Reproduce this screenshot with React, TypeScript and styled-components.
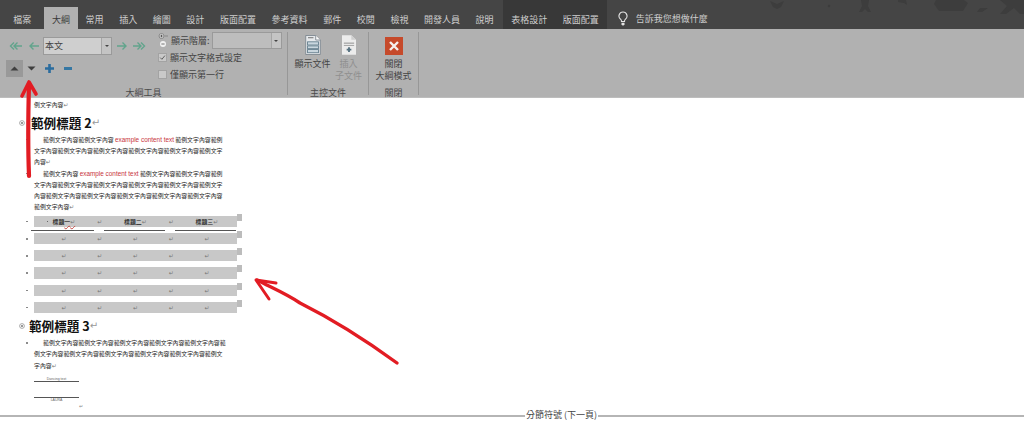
import styled, { createGlobalStyle } from 'styled-components';

const cjk = `"Noto Sans CJK TC", "Noto Sans", sans-serif`;
const RED = '#e21c23';

const GlobalStyle = createGlobalStyle`
  html, body {
    margin: 0;
    padding: 0;
    background: #fff;
    overflow: hidden;
  }
  body {
    font-family: ${cjk};
  }
`;

const Page = styled.div`
  position: relative;
  width: 1024px;
  height: 424px;
  overflow: hidden;
  display: flex;
  flex-direction: column;
  background: #fff;
`;

/* ---------- tab bar ---------- */

const TabBar = styled.div`
  position: relative;
  height: 29px;
  flex: none;
  display: flex;
  align-items: flex-end;
  padding-left: 5.5px;
  background: #454545;
  color: #cfcfcf;
  font-size: 9px;
`;

const Tab = styled.div<{ $active?: boolean; $first?: boolean }>`
  height: ${(p) => (p.$active ? 22 : 20)}px;
  padding: ${(p) => (p.$active ? 4 : 2)}px 7.8px 0;
  box-sizing: border-box;
  line-height: 18px;
  white-space: nowrap;
  margin-right: ${(p) => (p.$first ? 5 : 0)}px;
  background: ${(p) => (p.$active ? '#b1b1b1' : 'transparent')};
  color: ${(p) => (p.$active ? '#3a3a3a' : 'inherit')};
`;

const ContextTabs = styled.div`
  display: flex;
  align-items: flex-end;
  height: 29px;
  margin-left: 2px;
  background: #383838;
`;

const TellMe = styled.div`
  display: flex;
  align-items: center;
  gap: 8px;
  height: 20px;
  margin-left: 11px;
  line-height: 18px;
`;

const Doodles = styled.svg`
  position: absolute;
  top: 0;
  right: 0;
`;

/* ---------- ribbon ---------- */

const Ribbon = styled.div`
  height: 69px;
  flex: none;
  display: flex;
  box-sizing: border-box;
  padding-top: 3px;
  background: #b1b1b1;
  border-bottom: 1px solid #bdbdbd;
  color: #444;
  font-size: 9px;
`;

const Group = styled.div<{ $width: number }>`
  width: ${(p) => p.$width}px;
  height: 63px;
  box-sizing: border-box;
  border-right: 1px solid #979797;
  display: flex;
  flex-direction: column;
`;

const GroupBody = styled.div`
  flex: 1;
  display: flex;
  min-height: 0;
`;

const GroupLabel = styled.div`
  height: 13px;
  margin-bottom: -3.5px;
  line-height: 13px;
  text-align: center;
  color: #4a4a4a;
`;

const OutlineColumn = styled.div`
  width: 152px;
  flex: none;
  display: flex;
  flex-direction: column;
`;

const PromoteRow = styled.div`
  display: flex;
  align-items: center;
  margin-top: 5px;
  padding-left: 8px;
  height: 18px;
`;

const MoveRow = styled.div`
  display: flex;
  align-items: center;
  margin-top: 5px;
  padding-left: 6px;
  height: 17px;
`;

const IconSlot = styled.div<{ $width: number; $pressed?: boolean }>`
  width: ${(p) => p.$width}px;
  height: 17px;
  flex: none;
  display: flex;
  align-items: center;
  justify-content: center;
  background: ${(p) => (p.$pressed ? '#999' : 'transparent')};
`;

const Select = styled.div<{ $width: number; $height: number; $empty?: boolean }>`
  width: ${(p) => p.$width}px;
  height: ${(p) => p.$height}px;
  flex: none;
  box-sizing: border-box;
  display: flex;
  border: 1px solid #9a9a9a;
  background: ${(p) => (p.$empty ? '#bdbdbd' : '#cfcfcf')};
  color: #444;
  line-height: 16px;
`;

const SelectText = styled.div`
  flex: 1;
  padding-left: 1px;
`;

const SelectCaret = styled.div`
  width: 9px;
  display: flex;
  align-items: center;
  justify-content: center;
  background: #c4c4c4;
  border-left: 1px solid #a5a5a5;
  &::after {
    content: '';
    border: 2px solid transparent;
    border-top: 2.5px solid #444;
    margin-top: 2px;
  }
`;

const OptionsColumn = styled.div`
  display: flex;
  flex-direction: column;
  padding-left: 6px;
`;

const LevelRow = styled.div`
  display: flex;
  align-items: center;
  height: 17px;
  gap: 2px;
`;

const CheckRow = styled.div`
  display: flex;
  align-items: center;
  height: 17px;
  gap: 3px;
  white-space: nowrap;
`;

const CheckBox = styled.div`
  width: 9px;
  height: 9px;
  flex: none;
  box-sizing: border-box;
  display: flex;
  background: #c9c9c9;
  border: 1px solid #a3a3a3;
`;

const LargeButtons = styled.div<{ $shift?: number }>`
  flex: 1;
  display: flex;
  justify-content: center;
  padding-top: 3px;
  padding-left: ${(p) => p.$shift ?? 0}px;
`;

const LargeButton = styled.div<{ $disabled?: boolean }>`
  width: 36px;
  display: flex;
  flex-direction: column;
  align-items: center;
  text-align: center;
  line-height: 12px;
  color: ${(p) => (p.$disabled ? '#8f8f8f' : '#444')};
  white-space: nowrap;
`;

const LargeIcon = styled.div<{ $top?: number }>`
  height: 23px;
  flex: none;
  padding-top: ${(p) => p.$top ?? 0}px;
  box-sizing: border-box;
`;

/* ---------- document ---------- */

const Doc = styled.div`
  flex: 1;
  min-height: 0;
  display: flex;
  flex-direction: column;
  padding-top: 1.4px;
  color: #1c1c1c;
  font-size: 5.9px;
  line-height: 11.25px;
`;

const BodyBlock = styled.div<{ $top?: number }>`
  display: flex;
  margin-top: ${(p) => p.$top ?? 0}px;
  padding-left: 26px;
`;

const Marker = styled.div<{ $blank?: boolean }>`
  width: 8px;
  flex: none;
  &::before {
    content: '';
    display: ${(p) => (p.$blank ? 'none' : 'block')};
    width: 1.5px;
    height: 1.5px;
    margin-top: 5px;
    background: #777;
    border-radius: 50%;
  }
`;

const Para = styled.div`
  width: 196px;
  white-space: nowrap;
`;

const Line = styled.div<{ $indent?: boolean }>`
  height: 11.25px;
  padding-left: ${(p) => (p.$indent ? 9 : 0)}px;
`;

const Highlight = styled.span`
  font-family: "Liberation Sans", sans-serif;
  font-size: 6.4px;
  line-height: 0;
  color: #c8343c;
`;

const Mark = styled.span`
  color: #777;
  font-family: "DejaVu Sans", sans-serif;
  line-height: 0;
`;

const Heading = styled.div<{ $top: number; $gap: number }>`
  display: flex;
  align-items: center;
  height: 20px;
  margin-top: ${(p) => p.$top}px;
  padding-left: 19px;
  font-size: 12.6px;
  font-weight: 700;
  line-height: 20px;
  color: #111;
  white-space: pre;
  & > svg {
    margin-right: ${(p) => p.$gap}px;
    flex: none;
  }
`;

const HeadingMark = styled.span`
  color: #999;
  font-weight: 400;
  font-size: 10px;
  font-family: "DejaVu Sans", sans-serif;
`;

const Table = styled.div`
  margin-top: 3.25px;
  padding-left: 26px;
  display: flex;
  flex-direction: column;
  gap: 6px;
`;

const RowLine = styled.div`
  display: flex;
`;

const Row = styled.div`
  width: 202.5px;
  height: 11.2px;
  display: grid;
  grid-template-columns: repeat(5, 35.75px);
  padding-left: 12px;
  box-sizing: border-box;
  background: #c8c8c8;
  line-height: 11px;
  text-align: center;
  color: #222;
  font-weight: 500;
`;

const Cell = styled.div<{ $dot?: boolean }>`
  position: relative;
  white-space: nowrap;
  &::before {
    content: '';
    display: ${(p) => (p.$dot ? 'block' : 'none')};
    position: absolute;
    left: 0.5px;
    top: 5px;
    width: 1.5px;
    height: 1.5px;
    background: #666;
  }
`;

const RowEnd = styled.div`
  width: 4.5px;
  height: 7px;
  margin: -2px 0 0 0.5px;
  background: #bcbcbc;
`;

const Squiggle = styled.span`
  text-decoration: underline wavy #c4453f 0.5px;
  text-underline-offset: 1px;
`;

const HeaderRules = styled.div`
  display: flex;
  gap: 10px;
  margin: -3px 0 -4px 5px;
  height: 1px;
`;

const HeaderRule = styled.div<{ $width: number }>`
  width: ${(p) => p.$width}px;
  height: 1px;
  background: #555;
`;

const Signature = styled.div<{ $top: number }>`
  margin: ${(p) => p.$top}px 0 0 34px;
  width: 45px;
  display: flex;
  flex-direction: column;
  align-items: center;
  font-family: "Liberation Sans", sans-serif;
  font-size: 3.5px;
  line-height: 4px;
  color: #666;
`;

const SignatureRule = styled.div`
  width: 100%;
  height: 1px;
  flex: none;
  background: #555;
`;

const SignatureBullet = styled.div`
  width: 1.5px;
  height: 1.5px;
  margin: 8px 0 0 26.5px;
  background: #777;
  border-radius: 50%;
`;

const TrailingMark = styled.div`
  margin: 1px 0 0 79px;
  line-height: 6px;
  font-size: 5px;
  color: #888;
`;

const SectionBreak = styled.div`
  margin-top: auto;
  margin-bottom: 3px;
  display: flex;
  align-items: center;
  gap: 1px;
  font-size: 9px;
  line-height: 12px;
  color: #444;
  white-space: nowrap;
`;

const BreakRule = styled.div<{ $width?: number }>`
  flex: ${(p) => (p.$width ? `0 0 ${p.$width}px` : 1)};
  height: 2px;
  margin-top: 1px;
  background: #b5b5b5;
`;

const Annotations = styled.svg`
  position: absolute;
  left: 0;
  top: 0;
  pointer-events: none;
`;

/* ---------- icons ---------- */

const GREEN = '#62a48c';

const ArrowIcon = ({ dir, double }: { dir: 'left' | 'right'; double?: boolean }) => (
  <svg width="14" height="10" viewBox="0 0 14 10">
    <g
      fill="none"
      stroke={GREEN}
      strokeWidth="1.4"
      transform={dir === 'right' ? 'matrix(-1 0 0 1 14 0)' : undefined}
    >
      {double ? (
        <>
          <path d="M5 5h8M8.5 1.5 5 5l3.5 3.5" />
          <path d="M5 1.5 1.5 5 5 8.5" />
        </>
      ) : (
        <path d="M3 5h9M6.5 1.5 3 5l3.5 3.5" />
      )}
    </g>
  </svg>
);

const Triangle = ({ up }: { up?: boolean }) => (
  <svg width="9" height="5" viewBox="0 0 9 5">
    <path d={up ? 'M4.5 0.5 8.5 4.5H0.5z' : 'M0.5 0.5H8.5L4.5 4.5z'} fill="#3f3f3f" />
  </svg>
);

const PlusIcon = () => (
  <svg width="9" height="9" viewBox="0 0 9 9">
    <path d="M3.2 0h2.6v3.2H9v2.6H5.8V9H3.2V5.8H0V3.2h3.2z" fill="#2a6c9e" />
  </svg>
);

const MinusIcon = () => (
  <svg width="8" height="3" viewBox="0 0 8 3">
    <rect width="8" height="3" fill="#3577a3" />
  </svg>
);

const LevelIcon = () => (
  <svg width="11" height="15" viewBox="0 0 11 15">
    <circle cx="3.5" cy="3" r="2.4" fill="#e8e8e8" stroke="#555" strokeWidth="0.6" />
    <path d="M2.2 3h2.6M3.5 1.7v2.6" stroke="#333" strokeWidth="0.7" />
    <path d="M6.5 3H10" stroke="#777" strokeWidth="0.7" />
    <circle cx="5" cy="11" r="3" fill="#f1f1f1" />
    <path d="M3.4 11h3.2" stroke="#555" strokeWidth="0.8" />
  </svg>
);

const CheckMark = () => (
  <svg width="7" height="7" viewBox="0 0 7 7">
    <path d="M1.2 3.6 2.9 5.3 5.9 1.6" fill="none" stroke="#555" strokeWidth="0.9" />
  </svg>
);

const BulbIcon = () => (
  <svg width="10" height="17" viewBox="0 0 10 17">
    <path
      d="M5 1a4 4 0 0 0-2.4 7.2c.6.5.9 1.2.9 2.3h3c0-1.1.3-1.8.9-2.3A4 4 0 0 0 5 1z"
      fill="none"
      stroke="#e4e4e4"
      strokeWidth="1.1"
    />
    <path d="M3.5 11.8h3v1.6l-1 1.2h-1l-1-1.2z" fill="#e4e4e4" />
  </svg>
);

const ShowDocIcon = () => (
  <svg width="16" height="20" viewBox="0 0 17 22">
    <path d="M.5.5h11l5 5v16H.5z" fill="#e6e9ec" stroke="#7d8790" />
    <path d="M11.5.5v5h5" fill="#fff" stroke="#7d8790" />
    <path d="M3 3h6" stroke="#666" />
    <rect x="2.5" y="7.5" width="12" height="3.5" fill="#c9d6de" stroke="#67808f" />
    <rect x="2.5" y="12" width="12" height="3" fill="#c9d6de" stroke="#67808f" />
    <rect x="2.5" y="16" width="12" height="3.5" fill="#c9d6de" stroke="#67808f" />
  </svg>
);

const InsertDocIcon = () => (
  <svg width="14" height="20" viewBox="0 0 15 21">
    <path d="M0 0h10l5 5v16H0z" fill="#ececec" />
    <path d="M10 0v5h5" fill="#cfcfcf" />
    <path d="M2 8.5h11" stroke="#8a8a8a" />
    <path d="M2 11h11" stroke="#a0a0a0" />
    <path d="M6.5 13h2v1.5H10v2H8.5V18h-2v-1.5H5v-2h1.5z" fill="#55707f" />
  </svg>
);

const CloseIcon = () => (
  <svg width="18" height="18" viewBox="0 0 18 18">
    <rect width="18" height="18" fill="#c64a2b" />
    <path d="M5 5l8 8M13 5l-8 8" stroke="#f6f1ee" strokeWidth="2.4" />
  </svg>
);

const HeadingBullet = () => (
  <svg width="6" height="6" viewBox="0 0 6 6">
    <circle cx="3" cy="3" r="2.4" fill="none" stroke="#888" strokeWidth="0.7" />
    <circle cx="3" cy="3" r="1" fill="#777" />
  </svg>
);

/* ---------- content ---------- */

const mainTabs = ['大綱', '常用', '插入', '繪圖', '設計', '版面配置', '參考資料', '郵件', '校閱', '檢視', '開發人員', '說明'];

const sample = '範例文字內容';
const repeat = (n: number) => sample.repeat(n);

const App = () => (
  <Page>
    <GlobalStyle />
    <TabBar>
      <Tab $first>檔案</Tab>
      {mainTabs.map((t, i) => (
        <Tab key={t} $active={i === 0}>
          {t}
        </Tab>
      ))}
      <ContextTabs>
        <Tab>表格設計</Tab>
        <Tab>版面配置</Tab>
      </ContextTabs>
      <TellMe>
        <BulbIcon />
        告訴我您想做什麼
      </TellMe>
      <Doodles width="264" height="16" viewBox="0 0 264 16">
        <g fill="#3d3d3d">
          <path d="M10 1l7 3 7-3-3 6-4 2-4-2z" />
          <circle cx="69" cy="6" r="1.2" />
          <path d="M101 0h8l-1 6 3 6h-3l-3-3-3 3h-3l3-6z" />
          <path d="M138 0h8l1 5-3-2-6-1z" />
          <path d="M176 0h28l4 3-5 8h-24l-5-7z" />
          <path d="M210 3l2 8M220 8h8l-6 4h-5zM232 2l-3 6" />
          <path d="M240 0h24v14h-4l-6-6-8 6h-6l7-8z" />
        </g>
      </Doodles>
    </TabBar>

    <Ribbon>
      <Group $width={288}>
        <GroupBody>
          <OutlineColumn>
            <PromoteRow>
              <IconSlot $width={16}>
                <ArrowIcon dir="left" double />
              </IconSlot>
              <IconSlot $width={19}>
                <ArrowIcon dir="left" />
              </IconSlot>
              <Select $width={69} $height={18}>
                <SelectText>本文</SelectText>
                <SelectCaret />
              </Select>
              <IconSlot $width={19}>
                <ArrowIcon dir="right" />
              </IconSlot>
              <IconSlot $width={16}>
                <ArrowIcon dir="right" double />
              </IconSlot>
            </PromoteRow>
            <MoveRow>
              <IconSlot $width={17} $pressed>
                <Triangle up />
              </IconSlot>
              <IconSlot $width={17}>
                <Triangle />
              </IconSlot>
              <IconSlot $width={19}>
                <PlusIcon />
              </IconSlot>
              <IconSlot $width={17}>
                <MinusIcon />
              </IconSlot>
            </MoveRow>
          </OutlineColumn>
          <OptionsColumn>
            <LevelRow>
              <LevelIcon />
              顯示階層:
              <Select $width={70} $height={17} $empty>
                <SelectText />
                <SelectCaret />
              </Select>
            </LevelRow>
            <CheckRow>
              <CheckBox>
                <CheckMark />
              </CheckBox>
              顯示文字格式設定
            </CheckRow>
            <CheckRow>
              <CheckBox />
              僅顯示第一行
            </CheckRow>
          </OptionsColumn>
        </GroupBody>
        <GroupLabel>大綱工具</GroupLabel>
      </Group>
      <Group $width={81}>
        <GroupBody>
          <LargeButtons $shift={5}>
            <LargeButton>
              <LargeIcon>
                <ShowDocIcon />
              </LargeIcon>
              顯示文件
            </LargeButton>
            <LargeButton $disabled>
              <LargeIcon>
                <InsertDocIcon />
              </LargeIcon>
              插入
              <br />
              子文件
            </LargeButton>
          </LargeButtons>
        </GroupBody>
        <GroupLabel>主控文件</GroupLabel>
      </Group>
      <Group $width={50}>
        <GroupBody>
          <LargeButtons>
            <LargeButton>
              <LargeIcon $top={2}>
                <CloseIcon />
              </LargeIcon>
              關閉
              <br />
              大綱模式
            </LargeButton>
          </LargeButtons>
        </GroupBody>
        <GroupLabel>關閉</GroupLabel>
      </Group>
    </Ribbon>

    <Doc>
      <BodyBlock>
        <Marker $blank />
        <Para>
          <Line>
            例文字內容<Mark>↵</Mark>
          </Line>
        </Para>
      </BodyBlock>
      <Heading $top={2.25} $gap={6}>
        <HeadingBullet />
        範例標題 2<HeadingMark>↵</HeadingMark>
      </Heading>
      <BodyBlock $top={1}>
        <Marker />
        <Para>
          <Line $indent>
            {repeat(2)} <Highlight>example content text</Highlight> {sample}範例
          </Line>
          <Line>文字內容{repeat(4)}範例文字</Line>
          <Line>
            內容<Mark>↵</Mark>
          </Line>
        </Para>
      </BodyBlock>
      <BodyBlock>
        <Marker />
        <Para>
          <Line $indent>
            {sample} <Highlight>example content text</Highlight> {repeat(2)}範例
          </Line>
          <Line>文字內容{repeat(4)}範例文字</Line>
          <Line>內容{repeat(5)}</Line>
          <Line>
            {sample}
            <Mark>↵</Mark>
          </Line>
        </Para>
      </BodyBlock>

      <Table>
        <RowLine>
          <Marker />
          <Row>
            <Cell $dot>
              標題<Squiggle>一<Mark>↵</Mark></Squiggle>
            </Cell>
            <Cell>
              <Mark>↵</Mark>
            </Cell>
            <Cell>
              標題二<Mark>↵</Mark>
            </Cell>
            <Cell>
              <Mark>↵</Mark>
            </Cell>
            <Cell>
              標題三<Mark>↵</Mark>
            </Cell>
          </Row>
          <RowEnd />
        </RowLine>
        <HeaderRules>
          <HeaderRule $width={63} />
          <HeaderRule $width={61} />
          <HeaderRule $width={61} />
        </HeaderRules>
        {[0, 1, 2, 3, 4].map((r) => (
          <RowLine key={r}>
            <Marker />
            <Row>
              {[0, 1, 2, 3, 4].map((c) => (
                <Cell key={c}>
                  <Mark>↵</Mark>
                </Cell>
              ))}
            </Row>
            <RowEnd />
          </RowLine>
        ))}
      </Table>

      <Heading $top={3} $gap={4}>
        <HeadingBullet />
        範例標題 3<HeadingMark>↵</HeadingMark>
      </Heading>
      <BodyBlock $top={1.2}>
        <Marker />
        <Para>
          <Line $indent>{repeat(5)}範</Line>
          <Line>例文字內容{repeat(4)}範例文</Line>
          <Line>
            字內容<Mark>↵</Mark>
          </Line>
        </Para>
      </BodyBlock>
      <Signature $top={6}>
        Dancing text
        <SignatureRule />
      </Signature>
      <SignatureBullet />
      <Signature $top={7}>
        <SignatureRule />
        LAURA
      </Signature>
      <TrailingMark>↵</TrailingMark>

      <SectionBreak>
        <BreakRule $width={525} />
        分節符號 (下一頁)
        <BreakRule />
      </SectionBreak>
    </Doc>

    <Annotations width="1024" height="424" viewBox="0 0 1024 424">
      <g fill="none" stroke={RED} strokeLinecap="round" strokeLinejoin="round">
        <path d="M29 176C28 150 28 120 29 84" strokeWidth="4.2" />
        <path d="M22 96 29 82 36 94" strokeWidth="3.6" />
        <path d="M397 363C360 336 330 318 300 303C285 293 270 287 257 280" strokeWidth="3.4" />
        <path d="M276 283 256 280 269 299" strokeWidth="3" />
      </g>
    </Annotations>
  </Page>
);

export default App;
